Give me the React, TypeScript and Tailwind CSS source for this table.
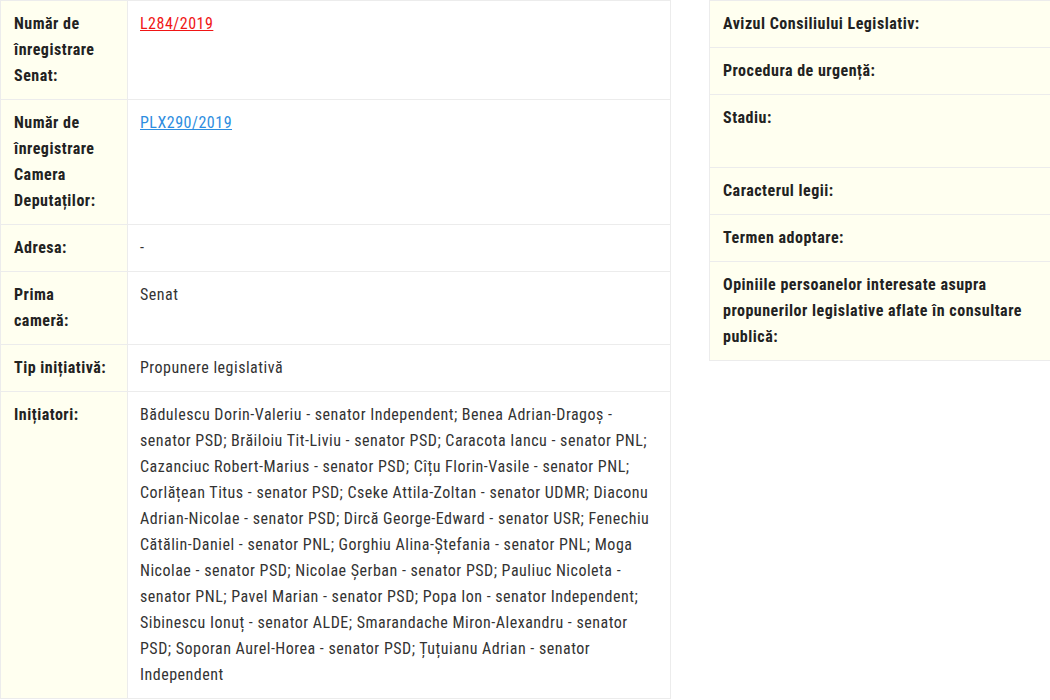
const leftRows: { label: React.ReactNode; value: React.ReactNode }[] = [
  {
    label: "Număr de înregistrare Senat:",
    value: (
      <a href="#" className="text-[#f01515] underline">
        L284/2019
      </a>
    ),
  },
  {
    label: "Număr de înregistrare Camera Deputaților:",
    value: (
      <a href="#" className="text-[#2d8de0] underline">
        PLX290/2019
      </a>
    ),
  },
  { label: "Adresa:", value: "-" },
  {
    label: (
      <>
        Prima
        <br />
        cameră:
      </>
    ),
    value: "Senat",
  },
  { label: "Tip inițiativă:", value: "Propunere legislativă" },
  {
    label: "Inițiatori:",
    value:
      "Bădulescu Dorin-Valeriu - senator Independent; Benea Adrian-Dragoș - senator PSD; Brăiloiu Tit-Liviu - senator PSD; Caracota Iancu - senator PNL; Cazanciuc Robert-Marius - senator PSD; Cîțu Florin-Vasile - senator PNL; Corlățean Titus - senator PSD; Cseke Attila-Zoltan - senator UDMR; Diaconu Adrian-Nicolae - senator PSD; Dircă George-Edward - senator USR; Fenechiu Cătălin-Daniel - senator PNL; Gorghiu Alina-Ștefania - senator PNL; Moga Nicolae - senator PSD; Nicolae Șerban - senator PSD; Pauliuc Nicoleta - senator PNL; Pavel Marian - senator PSD; Popa Ion - senator Independent; Sibinescu Ionuț - senator ALDE; Smarandache Miron-Alexandru - senator PSD; Soporan Aurel-Horea - senator PSD; Țuțuianu Adrian - senator Independent",
  },
];

const rightRows: { label: string; tall?: boolean }[] = [
  { label: "Avizul Consiliului Legislativ:" },
  { label: "Procedura de urgență:" },
  { label: "Stadiu:", tall: true },
  { label: "Caracterul legii:" },
  { label: "Termen adoptare:" },
  {
    label:
      "Opiniile persoanelor interesate asupra propunerilor legislative aflate în consultare publică:",
  },
];

export default function App() {
  return (
    <div
      className="w-[1050px] h-[700px] overflow-hidden bg-white flex items-start gap-[38px] text-[16px] leading-[26px] tracking-[0.5px]"
      style={{ fontFamily: "'Roboto Condensed', Roboto, sans-serif" }}
    >
      <table className="w-[671px] shrink-0 border-collapse table-fixed">
        <tbody>
          {leftRows.map((r, i) => (
            <tr key={i}>
              <td className="w-[127px] align-top border border-[#ececec] bg-[#fffff0] pl-[13px] pr-[12px] py-[10px] font-bold text-[#222]">
                {r.label}
              </td>
              <td className="align-top border border-[#ececec] pl-[12px] pr-[13px] py-[10px] text-[#333]">
                {r.value}
              </td>
            </tr>
          ))}
        </tbody>
      </table>
      <table className="w-[345px] shrink-0 border-collapse">
        <tbody>
          {rightRows.map((r) => (
            <tr key={r.label}>
              <td
                className={`align-top border border-[#ececec] bg-[#fffff0] px-[13px] py-[10px] font-bold text-[#222] ${
                  r.tall ? "pb-[36px]" : ""
                }`}
              >
                {r.label}
              </td>
            </tr>
          ))}
        </tbody>
      </table>
    </div>
  );
}
